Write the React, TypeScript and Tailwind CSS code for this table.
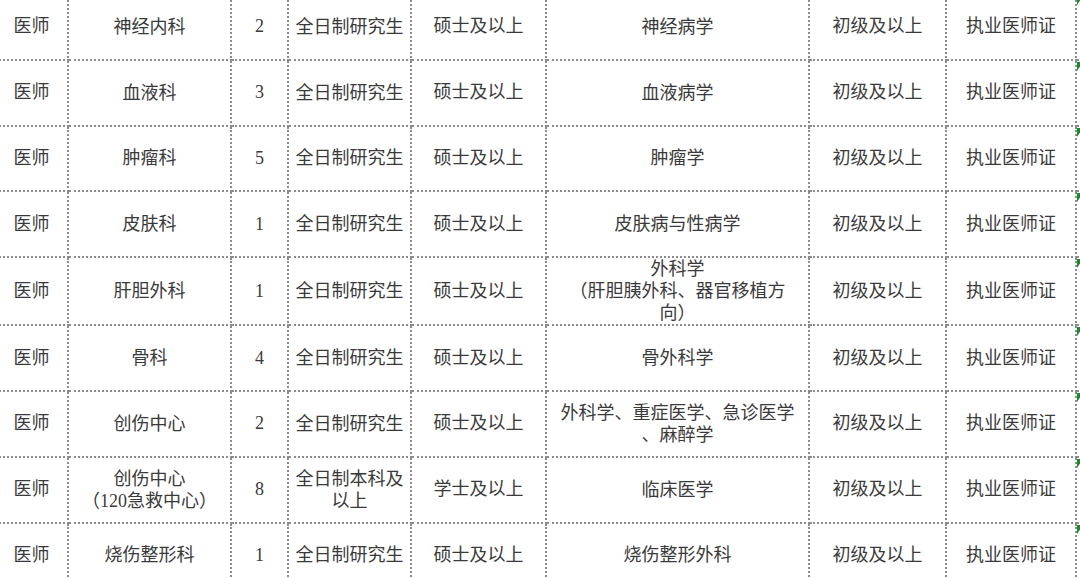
import React from 'react';

type Row = {
    title: string;
    dept: string[];
    count: string;
    edu: string[];
    degree: string;
    major: string[];
    level: string;
    cert: string;
};

const rows: Row[] = [
    { title: '医师', dept: ['神经内科'], count: '2', edu: ['全日制研究生'], degree: '硕士及以上', major: ['神经病学'], level: '初级及以上', cert: '执业医师证' },
    { title: '医师', dept: ['血液科'], count: '3', edu: ['全日制研究生'], degree: '硕士及以上', major: ['血液病学'], level: '初级及以上', cert: '执业医师证' },
    { title: '医师', dept: ['肿瘤科'], count: '5', edu: ['全日制研究生'], degree: '硕士及以上', major: ['肿瘤学'], level: '初级及以上', cert: '执业医师证' },
    { title: '医师', dept: ['皮肤科'], count: '1', edu: ['全日制研究生'], degree: '硕士及以上', major: ['皮肤病与性病学'], level: '初级及以上', cert: '执业医师证' },
    { title: '医师', dept: ['肝胆外科'], count: '1', edu: ['全日制研究生'], degree: '硕士及以上', major: ['外科学', '（肝胆胰外科、器官移植方', '向）'], level: '初级及以上', cert: '执业医师证' },
    { title: '医师', dept: ['骨科'], count: '4', edu: ['全日制研究生'], degree: '硕士及以上', major: ['骨外科学'], level: '初级及以上', cert: '执业医师证' },
    { title: '医师', dept: ['创伤中心'], count: '2', edu: ['全日制研究生'], degree: '硕士及以上', major: ['外科学、重症医学、急诊医学', '、麻醉学'], level: '初级及以上', cert: '执业医师证' },
    { title: '医师', dept: ['创伤中心', '（120急救中心）'], count: '8', edu: ['全日制本科及', '以上'], degree: '学士及以上', major: ['临床医学'], level: '初级及以上', cert: '执业医师证' },
    { title: '医师', dept: ['烧伤整形科'], count: '1', edu: ['全日制研究生'], degree: '硕士及以上', major: ['烧伤整形外科'], level: '初级及以上', cert: '执业医师证' },
];

const cellCls = 'h-[65.8px] p-0 border-2 border-dotted border-[#8c8c8c] text-center align-middle whitespace-nowrap';

function Lines({ lines }: { lines: string[] }) {
    return (
        <div className="flex flex-col items-center leading-[22px]">
            {lines.map((l, i) => <span key={i}>{l}</span>)}
        </div>
    );
}

export default function App() {
    return (
        <div className="w-[1080px] h-[578px] overflow-hidden bg-white">
            <table
                className="table-fixed border-collapse w-[1092px] -mt-[7px] -ml-[6px] text-[18px] text-[#3a3a3a]"
                style={{ fontFamily: '"Liberation Serif", "Noto Sans CJK SC", serif' }}
            >
                <colgroup>
                    <col className="w-[73px]" />
                    <col className="w-[163px]" />
                    <col className="w-[57px]" />
                    <col className="w-[123px]" />
                    <col className="w-[135px]" />
                    <col className="w-[263px]" />
                    <col className="w-[137px]" />
                    <col className="w-[130px]" />
                    <col className="w-[11px]" />
                </colgroup>
                <tbody>
                    {rows.map((r, i) => (
                        <tr key={i}>
                            <td className={cellCls}>{r.title}</td>
                            <td className={cellCls}><Lines lines={r.dept} /></td>
                            <td className={cellCls}>{r.count}</td>
                            <td className={cellCls}><Lines lines={r.edu} /></td>
                            <td className={cellCls}>{r.degree}</td>
                            <td className={cellCls}><Lines lines={r.major} /></td>
                            <td className={cellCls}>{r.level}</td>
                            <td className={cellCls}>{r.cert}</td>
                            <td className="h-[65.8px] p-0 align-top border-t-2 border-b-2 border-dotted border-[#8c8c8c]">
                                <div className="mt-[1px] w-0 h-0 border-t-[9px] border-t-[#1f8a2a] border-r-[6px] border-r-transparent" />
                            </td>
                        </tr>
                    ))}
                </tbody>
            </table>
        </div>
    );
}
